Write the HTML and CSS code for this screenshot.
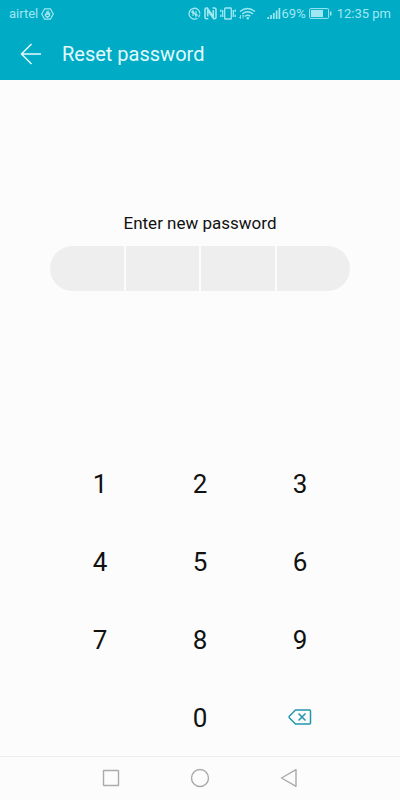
FILE: index.html
```html
<!DOCTYPE html>
<html lang="en">
<head>
<meta charset="utf-8">
<meta name="viewport" content="width=device-width, initial-scale=1">
<title>Reset password</title>
<link rel="stylesheet" href="styles.css">
</head>
<body>
<header class="top">
  <div class="status">
    <span>airtel</span>
    <svg class="carrier" width="13" height="12" viewBox="0 0 13 12" fill="none" stroke="currentColor"><path d="M3.6 .8h5.8l2.9 5.2-2.9 5.2H3.600L.7 6z" stroke-width="1.2"/><path d="M4.400 5.400v2.200l2 1.800 2.200-1.800V4.600M5.800 7V3.200M7.200 7V2.800" stroke-width="1.300"/></svg>
    <div class="signals">
      <svg width="13" height="13" viewBox="0 0 13 13" fill="none" stroke="currentColor"><path d="M9.400 11.200A5.400 5.400 0 1 1 11.900 6.500M11.800 7.500A5.400 5.400 0 0 1 10.500 10.200" stroke-width="1.300"/><path d="M5 9V3.800L3.400 5.500M8 4v5.200l1.600-1.700M5 4l3 5" stroke-width="1.200"/></svg>
      <svg width="13" height="13" viewBox="0 0 13 13" fill="none" stroke="currentColor"><path d="M4.300 11.700H2.500Q1 11.700 1 10.200V2.500Q1 1 2.500 1H3.300L9.300 9.500V3M8.500 1h2Q12 1 12 2.500v7.700q0 1.500-1.500 1.500H9.700L3.700 3.500V9.500" stroke-width="1.600"/></svg>
      <svg width="16" height="13" viewBox="0 0 16 13" fill="none" stroke="currentColor" stroke-width="1.300"><rect x="4.700" y="1" width="6.600" height="11" rx=".6"/><path d="M2.700 3v7M13.300 3v7M.8 2.500v2.500M.8 7.500v2.500M15.200 2.500v2.500M15.200 7.500v2.500"/></svg>
      <svg width="17" height="13" viewBox="0 0 17 13" fill="none" stroke="currentColor" stroke-width="1.400"><path d="M1 4.500Q8.500-1.500 16 4.500M3.200 7Q8.700 2.500 14 7M6 9.300q2.800-2.300 5.400 0"/><circle cx="8.800" cy="11.300" r="1.200" fill="currentColor" stroke="none"/><path d="M1.500 8v3.500M.2 10l1.300 1.500M4 11.500V8l1.300 1.500" stroke-width=".9"/></svg>
      <svg class="bars" width="14" height="13" viewBox="0 0 14 13" stroke="currentColor" stroke-width="1.700"><path d="M1.200 12v-2M4 12V8M6.800 12V6M9.600 12V3.500M12.400 12V1"/></svg>
      <span>69%</span>
      <svg class="battery" width="23" height="11" viewBox="0 0 23 11"><rect x=".6" y=".6" width="19" height="9.800" rx="1" fill="none" stroke="currentColor"/><path d="M2 2h12v7H2zM21 3.500h1.500v4H21z" fill="currentColor"/></svg>
      <time>12:35 pm</time>
    </div>
  </div>
  <div class="bar">
    <a class="back" href="#" aria-label="Back"><svg width="22" height="22" viewBox="0 0 22 22" fill="none" stroke="currentColor" stroke-width="1.500"><path d="M21 11H1.500M11.500 1 1.500 11l10 10"/></svg></a>
    <h1>Reset password</h1>
  </div>
</header>
<main>
  <form class="entry">
    <fieldset>
      <legend>Enter new password</legend>
      <div class="pin">
        <input type="password" maxlength="1" aria-label="Digit 1">
        <input type="password" maxlength="1" aria-label="Digit 2">
        <input type="password" maxlength="1" aria-label="Digit 3">
        <input type="password" maxlength="1" aria-label="Digit 4">
      </div>
    </fieldset>
  </form>
  <div class="keypad">
    <button>1</button><button>2</button><button>3</button>
    <button>4</button><button>5</button><button>6</button>
    <button>7</button><button>8</button><button>9</button>
    <button class="zero">0</button>
    <button class="erase" aria-label="Delete"><svg width="24" height="16" viewBox="0 0 24 16" fill="none" stroke="currentColor" stroke-width="1.500" stroke-linejoin="round"><path d="M7.500 1H21.500q1 0 1 1v12q0 1-1 1H7.500L1.500 9Q.8 8 1.500 7zM10.500 4.500l7 7M17.500 4.500l-7 7"/></svg></button>
  </div>
</main>
<nav class="system">
  <div class="system-keys">
    <button aria-label="Recent apps"><svg width="20" height="20" viewBox="0 0 20 20"><rect x="2.500" y="2.500" width="15" height="15" rx=".5"/></svg></button>
    <button aria-label="Home"><svg width="20" height="20" viewBox="0 0 20 20"><circle cx="10" cy="10" r="8.500"/></svg></button>
    <button aria-label="Back"><svg width="20" height="20" viewBox="0 0 20 20"><path d="M2.500 10 17 1.700v16.600z" stroke-linejoin="round"/></svg></button>
  </div>
</nav>
</body>
</html>
```
FILE: styles.css
```css
* { box-sizing: border-box; }
body {
  margin: 0;
  min-height: 100vh;
  display: flex;
  flex-direction: column;
  background: #fcfcfc;
  color: #111;
  font-family: Roboto, "Liberation Sans", sans-serif;
}
svg { display: block; flex: none; }
button {
  display: flex;
  align-items: center;
  justify-content: center;
  padding: 0;
  border: 0;
  background: none;
  color: inherit;
  font: inherit;
}
.top { background: #00acc5; color: #e2fafd; }
.status {
  display: flex;
  align-items: center;
  height: 27px;
  padding: 0 9px;
  font-size: 13px;
  color: #9fe8f2;
}
.carrier { margin-left: 3px; }
.signals { display: flex; align-items: center; gap: 3px; margin-left: auto; }
.bars { margin-left: 8px; margin-right: -2px; }
.battery { margin-right: 2px; }
.bar { display: flex; align-items: center; height: 53px; padding: 0 20px; gap: 20px; }
.back { color: inherit; }
h1 { margin: 0; font-size: 20px; font-weight: 400; line-height: 24px; }
main { flex: 1; display: flex; flex-direction: column; padding: 0 50px; }
.entry { flex: 1; padding-top: 132px; }
fieldset { margin: 0; padding: 0; border: 0; min-width: 0; }
legend { width: 100%; padding: 0; text-align: center; font-size: 17px; line-height: 22px; }
.pin {
  display: grid;
  grid-template-columns: repeat(4, 1fr);
  gap: 2px;
  margin-top: 12px;
  border-radius: 23px;
  overflow: hidden;
}
.pin input {
  width: 100%;
  height: 45px;
  padding: 0;
  border: 0;
  border-radius: 0;
  background: #eee;
  text-align: center;
  font-size: 26px;
}
.keypad {
  display: grid;
  grid-template-columns: repeat(3, 1fr);
  grid-auto-rows: 78px;
  font-size: 26px;
}
.keypad button { padding-top: 2px; }
.keypad .erase { padding-top: 0; color: #2295ab; }
.zero { grid-column: 2; }
.system { border-top: 1px solid #ececec; height: 44px; padding-bottom: 2px; }
.system-keys {
  display: grid;
  grid-template-columns: repeat(3, 1fr);
  width: 67%;
  height: 100%;
  margin: 0 auto;
}
.system svg { fill: none; stroke: #aaa; stroke-width: 1.4; }
```
